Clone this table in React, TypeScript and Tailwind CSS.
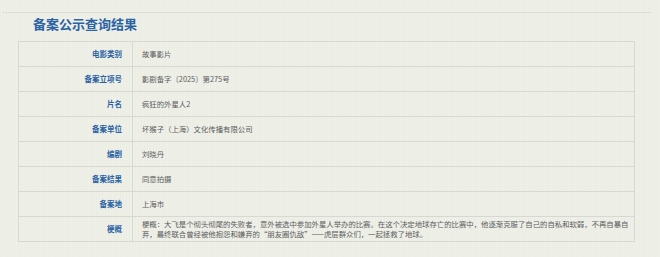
const rows: { label: string; value: string }[] = [
  { label: '电影类别', value: '故事影片' },
  { label: '备案立项号', value: '影剧备字〔2025〕第275号' },
  { label: '片名', value: '疯狂的外星人2' },
  { label: '备案单位', value: '坏猴子（上海）文化传播有限公司' },
  { label: '编剧', value: '刘晓丹' },
  { label: '备案结果', value: '同意拍摄' },
  { label: '备案地', value: '上海市' },
  {
    label: '梗概',
    value:
      '梗概：大飞是个彻头彻尾的失败者，意外被选中参加外星人举办的比赛。在这个决定地球存亡的比赛中，他逐渐克服了自己的自私和软弱，不再自暴自弃，最终联合曾经被他抱怨和嫌弃的“朋友圈仇敌”——虎层群众们，一起拯救了地球。',
  },
];

export default function App() {
  return (
    <div
      className="w-[660px] h-[257px] overflow-hidden bg-[#eef0e8] bg-[repeating-linear-gradient(90deg,rgba(0,0,0,0.012)_0px,rgba(0,0,0,0.012)_1px,transparent_1px,transparent_3px)] pt-[12px] pl-[2px]"
      style={{ fontFamily: '"Noto Sans CJK SC", "Noto Sans", sans-serif' }}
    >
      {/* header */}
      <div className="w-[649px] border-t border-[#dcdfd6]">
        <h1 className="pl-[31px] pt-[2px] h-[28px] text-[13px] leading-[18px] font-bold text-[#2a62a3]">
          备案公示查询结果
        </h1>
      </div>

      {/* result table */}
      <div className="ml-[16px] w-[617px] border border-[#d6d8d2]">
        {rows.map((row, i) => (
          <div
            key={row.label}
            className={`grid grid-cols-[114px_1fr] ${i > 0 ? 'border-t border-[#d6d8d2]' : ''}`}
          >
            <div className="flex items-center justify-end pr-[10px] min-h-[24px] border-r border-[#d6d8d2] text-[7.5px] font-bold text-[#2a62a3]">
              {row.label}
            </div>
            <div className="flex items-center pl-[9px] pr-0 py-[2px] min-h-[24px] text-[7.4px] leading-[10px] tracking-[-0.02px] text-[#5c5c5c]">
              {row.value}
            </div>
          </div>
        ))}
      </div>
    </div>
  );
}
